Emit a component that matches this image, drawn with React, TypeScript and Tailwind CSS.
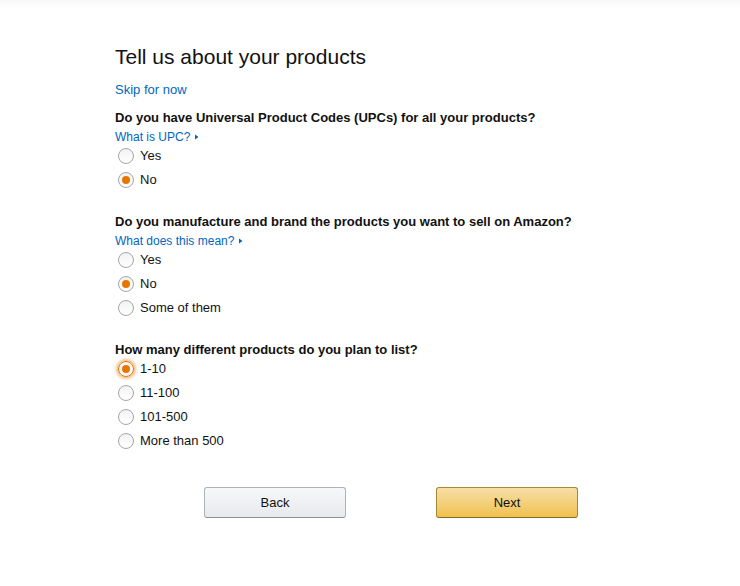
import React, { useState } from "react";

type Opt = { label: string };

function Radio({ checked, focused, label, onClick }: { checked: boolean; focused?: boolean; label: string; onClick: () => void }) {
  return (
    <label className="flex items-center h-[24px] cursor-pointer" onClick={onClick}>
      <span
        className={
          focused
            ? "relative ml-[3px] w-[16px] h-[16px] rounded-full border border-[#e77600] bg-gradient-to-b from-[#f6f6f6] to-white shadow-[0_0_3px_2px_rgba(228,121,17,0.5)] flex items-center justify-center"
            : "relative ml-[3px] w-[16px] h-[16px] rounded-full border border-[#a6a6a6] bg-gradient-to-b from-[#f2f2f2] to-white flex items-center justify-center"
        }
      >
        {checked && <span className="w-[8px] h-[8px] rounded-full bg-[#e77600]" />}
      </span>
      <span className="ml-[6px] text-[13px] text-[#111]">{label}</span>
    </label>
  );
}

function Arrow() {
  return (
    <svg width="6" height="8" viewBox="0 0 6 8" className="inline-block ml-[4px] mb-[1px]">
      <path d="M1 1.5 L4.5 4 L1 6.5 Z" fill="#0066c0" />
    </svg>
  );
}

function Question({
  title,
  link,
  options,
  value,
  setValue,
  focusedIndex,
}: {
  title: string;
  link?: string;
  options: Opt[];
  value: number;
  setValue: (n: number) => void;
  focusedIndex?: number;
}) {
  return (
    <div className="flex flex-col">
      <div className={link ? "text-[13px] font-bold text-[#111] leading-[19px]" : "text-[13px] font-bold text-[#111] leading-[19px] h-[17px]"}>{title}</div>
      {link && (
        <div className="text-[12px] text-[#0066c0] leading-[20px] h-[17px]">
          {link}
          <Arrow />
        </div>
      )}
      <div className="flex flex-col">
        {options.map((o, i) => (
          <Radio key={o.label} label={o.label} checked={value === i} focused={focusedIndex === i} onClick={() => setValue(i)} />
        ))}
      </div>
    </div>
  );
}

export default function App() {
  const [a, setA] = useState(1);
  const [b, setB] = useState(1);
  const [c, setC] = useState(0);
  return (
    <div className="w-[740px] h-[586px] bg-white" style={{ fontFamily: '"Liberation Sans", Arial, sans-serif' }}>
      <div className="h-[10px] bg-gradient-to-b from-[#f8f8f8] to-white" />
      <div className="w-[550px] ml-[115px] pt-[34px] flex flex-col">
        <h1 className="text-[21px] leading-[26px] text-[#111] font-normal">Tell us about your products</h1>
        <a className="mt-[10px] text-[13px] leading-[19px] text-[#0066c0]">Skip for now</a>
        <div className="mt-[9px]">
          <Question
            title="Do you have Universal Product Codes (UPCs) for all your products?"
            link="What is UPC?"
            options={[{ label: "Yes" }, { label: "No" }]}
            value={a}
            setValue={setA}
          />
        </div>
        <div className="mt-[20px]">
          <Question
            title="Do you manufacture and brand the products you want to sell on Amazon?"
            link="What does this mean?"
            options={[{ label: "Yes" }, { label: "No" }, { label: "Some of them" }]}
            value={b}
            setValue={setB}
          />
        </div>
        <div className="mt-[20px]">
          <Question
            title="How many different products do you plan to list?"
            options={[{ label: "1-10" }, { label: "11-100" }, { label: "101-500" }, { label: "More than 500" }]}
            value={c}
            setValue={setC}
            focusedIndex={0}
          />
        </div>
        <div className="mt-[34px] ml-[89px] flex gap-[90px]">
          <button className="w-[142px] h-[31px] rounded-[3px] border border-[#adb1b8] border-b-[#8d9096] bg-gradient-to-b from-[#f7f8fa] to-[#e7e9ec] text-[13px] text-[#111]">
            Back
          </button>
          <button className="w-[142px] h-[31px] rounded-[3px] border border-[#a88734] border-b-[#846a29] bg-gradient-to-b from-[#f7dfa5] to-[#f0c14b] text-[13px] text-[#111]">
            Next
          </button>
        </div>
      </div>
    </div>
  );
}
